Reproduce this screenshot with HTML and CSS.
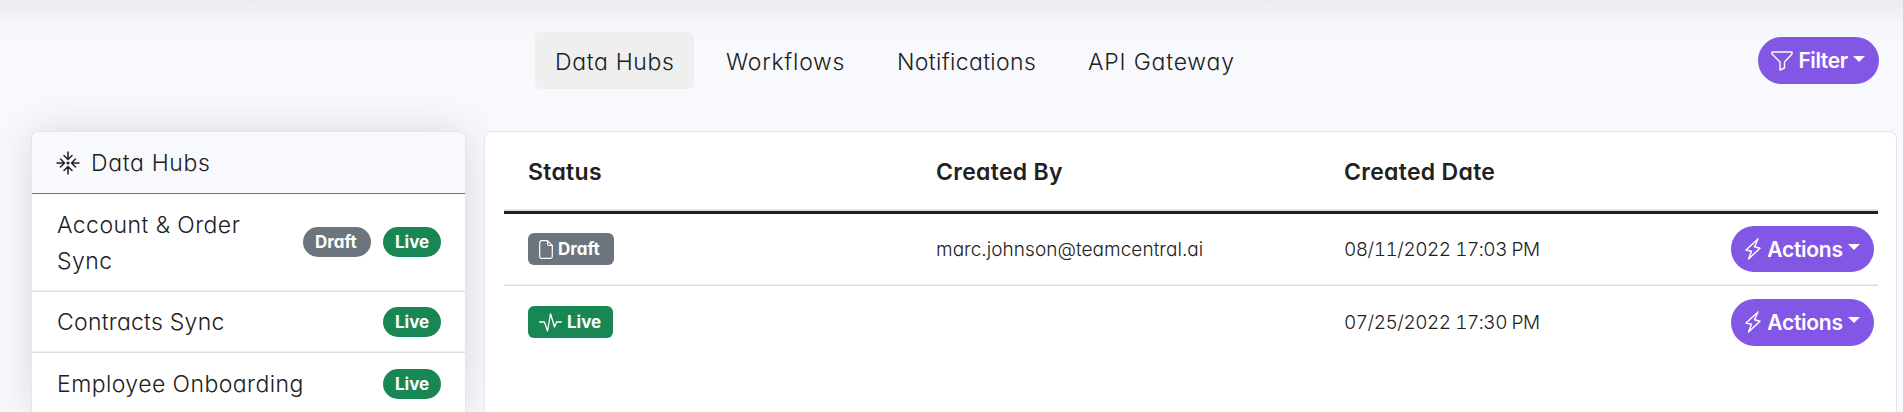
FILE: index.html
```html
<!DOCTYPE html>
<html lang="en">
<head>
<meta charset="utf-8">
<title>Data Hubs</title>
<link rel="stylesheet" href="styles.css">
</head>
<body>
<svg class="defs" width="0" height="0">
  <symbol id="bolt" viewBox="0 0 16 22"><path d="M13 1 1 12 6.500 13.300 3.500 21 15 10.300 9.500 8.800Z" fill="none" stroke="currentColor" stroke-width="1.400" stroke-linejoin="round"/></symbol>
</svg>
<header class="toolbar">
  <nav class="tabs">
    <a class="tab active"><span class="t-hubs">Data Hubs</span></a>
    <a class="tab"><span class="t-work">Workflows</span></a>
    <a class="tab"><span class="t-note">Notifications</span></a>
    <a class="tab"><span class="t-api">API Gateway</span></a>
  </nav>
  <button class="btn filter"><svg width="22" height="20" viewBox="0 0 22 20"><path d="M1 1H21V3L13.500 11V17L9 19V11L1 3Z" fill="none" stroke="currentColor" stroke-width="1.400" stroke-linejoin="round"/></svg><span>Filter</span><i class="caret"></i></button>
</header>
<main class="content">
  <aside class="card hubs">
    <div class="hubs-head">
      <svg width="24" height="24" viewBox="0 0 24 24" fill="none" stroke="currentColor" stroke-width="1.500" stroke-linecap="round" stroke-linejoin="round"><path d="M12 1V8M8 4.500 12 8.500 16 4.500M12 23V16M8 19.500 12 15.500 16 19.500M1 12H8M4.500 8 8.500 12 4.500 16M23 12H16M19.500 8 15.500 12 19.500 16"/><circle cx="12" cy="12" r=".8" fill="currentColor"/></svg>
      <span>Data Hubs</span>
    </div>
    <div class="hub tall"><span class="name">Account &amp; Order Sync</span><span class="pill draft">Draft</span><span class="pill live">Live</span></div>
    <div class="hub"><span class="name short">Contracts Sync</span><span class="pill live">Live</span></div>
    <div class="hub"><span class="name">Employee Onboarding</span><span class="pill live">Live</span></div>
  </aside>
  <section class="card table">
    <div class="row head"><span>Status</span><span>Created By</span><span>Created Date</span></div>
    <div class="row first">
      <div><span class="badge draft"><svg width="14" height="19" viewBox="0 0 14 19" fill="none" stroke="currentColor" stroke-width="1.200" stroke-linejoin="round"><path d="M8.500.7H2.500A1.800 1.800 0 0 0 .7 2.500V16.500A1.800 1.800 0 0 0 2.500 18.300H11.500A1.800 1.800 0 0 0 13.300 16.500V5.500ZM8.500.7V4A1.500 1.500 0 0 0 10 5.500H13.300"/></svg><span>Draft</span></span></div>
      <div class="mail">marc.johnson@teamcentral.ai</div>
      <div class="date">08/11/2022 17:03 PM</div>
      <div class="act"><button class="btn actions"><svg width="16" height="22"><use href="#bolt"/></svg><span>Actions</span><i class="caret"></i></button></div>
    </div>
    <div class="row">
      <div><span class="badge live"><svg width="23" height="19" viewBox="0 0 23 19" fill="none" stroke="currentColor" stroke-width="1.300" stroke-linejoin="round" stroke-linecap="round"><path d="M.7 9H5.500L8.500 18 11.500.8 15.500 14 17.500 9H22.300"/></svg><span>Live</span></span></div>
      <div></div>
      <div class="date">07/25/2022 17:30 PM</div>
      <div class="act"><button class="btn actions"><svg width="16" height="22"><use href="#bolt"/></svg><span>Actions</span><i class="caret"></i></button></div>
    </div>
  </section>
</main>
</body>
</html>
```
FILE: styles.css
```css
* { box-sizing: border-box; }
html, body { height: 412px; overflow: hidden; }
body {
  margin: 0;
  background: #f8f9fd;
  color: #212121;
  font-family: Inter, "Open Sans", sans-serif;
  font-feature-settings: "cv11";
  font-weight: 300;
  font-size: 23px;
}
.defs { display: block; height: 0; }
.toolbar {
  display: flex;
  justify-content: space-between;
  height: 131px;
  padding: 32px 24px 0 535px;
  background: linear-gradient(#ebecef, #f0f1f4 12px, #f5f6fa 24px, #f8f9fd 42px);
}
.tabs { display: flex; gap: 12px; }
.tab { height: 57px; padding: 1px 20px 0; line-height: 58px; white-space: nowrap; border-radius: 6px; letter-spacing: .65px; }
.tab span { display: inline-block; }
.tab.active { background: #efefef; }
.t-hubs { width: 119px; }
.t-work { width: 119px; letter-spacing: .75px; }
.t-note { width: 139px; letter-spacing: .35px; }
.t-api { width: 147px; letter-spacing: .8px; }
.btn {
  display: flex;
  align-items: center;
  height: 47px;
  padding: 0 14px;
  border: 0;
  border-radius: 24px;
  background: #8257e5;
  color: #fff;
  font: inherit;
  font-size: 21px;
  font-weight: 600;
}
.caret { border: 6px solid transparent; border-top-color: #fff; border-bottom: 0; margin-bottom: 4px; }
.filter { width: 121px; margin-top: 5px; padding-left: 13px; }
.filter span { width: 50px; margin: 0 5px; letter-spacing: -.4px; }
.actions { width: 143px; }
.actions span { width: 76px; margin: 0 5px 0 6px; letter-spacing: -.25px; }
.content { display: flex; gap: 18px; padding-left: 31px; height: 281px; }
.card { border: 1px solid #e3e6f0; border-bottom: 0; border-radius: 8px 8px 0 0; background: #fff; }
.hubs { width: 435px; box-shadow: 0 0 40px rgba(0, 0, 0, .13); }
.hubs-head { display: flex; align-items: center; height: 62px; padding: 1px 0 0 24px; gap: 11px; background: #f8f9fd; border-bottom: 1px solid #8257e5; border-radius: 8px 8px 0 0; letter-spacing: .65px; }
.hub { display: flex; align-items: center; gap: 12px; height: 61px; padding: 0 24px 0 25px; border-bottom: 1px solid #dcdddd; box-shadow: inset 0 -1px #efefef; line-height: 36px; }
.hub.tall { height: 98px; }
.tall .pill { margin-bottom: 2px; }
.hub:last-child { border: 0; box-shadow: none; }
.name { flex: 1; letter-spacing: .44px; }
.name.short { letter-spacing: .25px; }
.pill { height: 30px; padding-left: 12px; border-radius: 15px; line-height: 30px; font-size: 17px; font-weight: 700; color: #fff; }
.pill.draft { width: 68px; }
.pill.live { width: 58px; }
.draft { background: #6c757d; }
.live { background: #198754; }
.table { width: 1413px; padding: 0 18px 0 19px; }
.row { display: grid; grid-template-columns: 408px 408px 320px 1fr; align-items: center; height: 72px; padding-left: 24px; font-size: 19px; border-bottom: 1px solid #dcdddd; box-shadow: inset 0 -1px #efefef; }
.row:last-child { border: 0; box-shadow: none; }
.row.first { padding-bottom: 1px; }
.first .actions { height: 46px; }
.row.head { height: 82px; font-size: 23px; font-weight: 600; letter-spacing: .3px; border-bottom: 3px solid #212121; box-shadow: inset 0 -2px #e0e4e4; }
.mail { letter-spacing: .05px; }
.date { font-feature-settings: "cv11", "tnum"; letter-spacing: -.5px; }
.badge { display: flex; align-items: center; gap: 5px; width: 86px; height: 32px; padding-left: 11px; border-radius: 6px; font-size: 17px; font-weight: 700; color: #fff; }
.badge.live { width: 85px; }
.act { display: flex; justify-content: flex-end; padding-right: 4px; }
```
